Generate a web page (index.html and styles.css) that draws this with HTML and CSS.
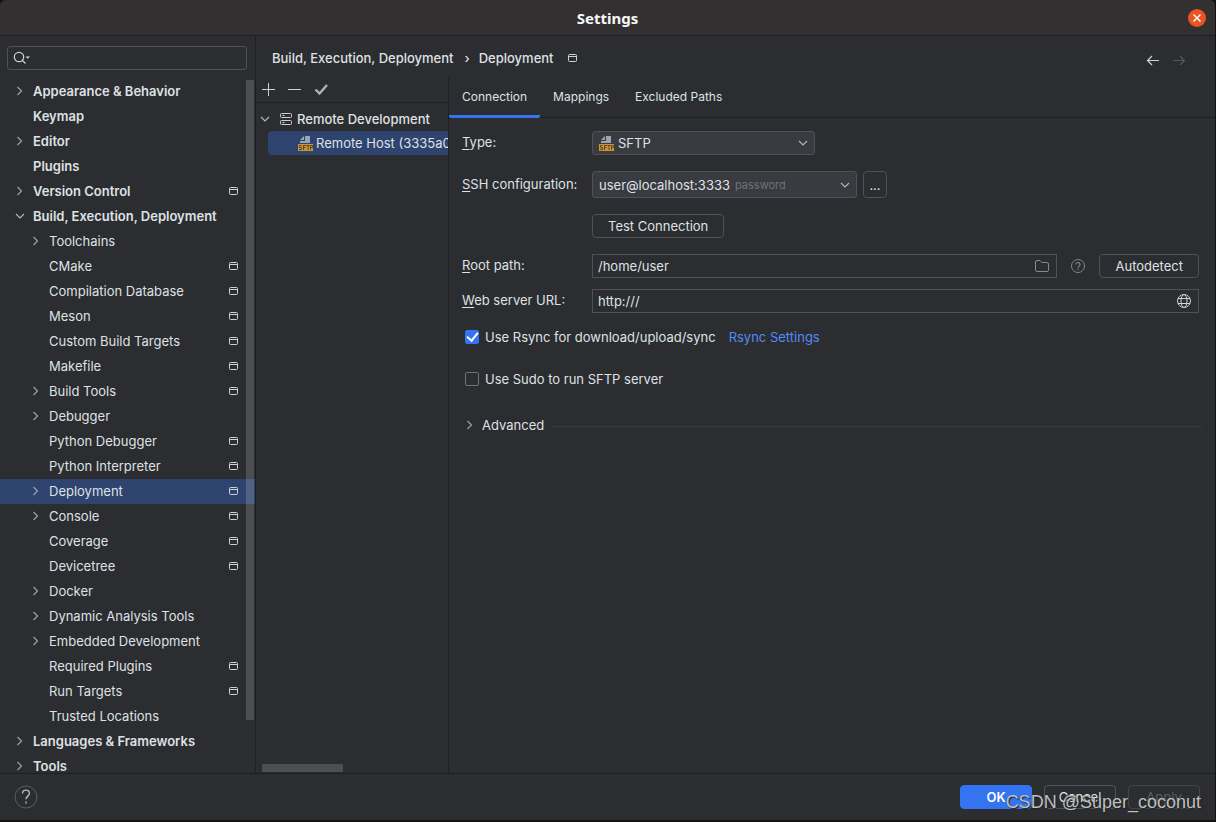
FILE: index.html
```html
<!DOCTYPE html>
<html lang="en">
<head>
<meta charset="utf-8">
<title>Settings</title>
<link rel="stylesheet" href="styles.css">
</head>
<body>
<svg class="defs" aria-hidden="true">
  <symbol id="right" viewBox="0 0 16 16"><path d="M5.500 4l4 4-4 4" fill="none" stroke="#9da0a8" stroke-width="1.2"/></symbol>
  <symbol id="down" viewBox="0 0 16 16"><path d="M4 6l4 4 4-4" fill="none" stroke="#b4b8bf" stroke-width="1.1"/></symbol>
  <symbol id="project" viewBox="0 0 16 16"><rect x="3.5" y="4.5" width="8" height="7" rx="1" fill="none" stroke="#ced0d6"/><path d="M4 6.500h7" stroke="#ced0d6"/></symbol>
  <symbol id="sftp" viewBox="0 0 16 16"><path d="M7 1h5v7H2V6h5z" fill="#9aa7b0"/><path d="M6 1v4H2z" fill="#9aa7b0"/><rect x="0" y="9" width="15" height="7" fill="#c9953c"/><path d="M3.5 10.5H1.500V12.500H3.500V14.500H1M5.500 15V10.500H8M5.500 12.500H7.500M8.500 10.500H11.500M10 10.500V15M12.500 15V10.500H14.500V12.500H12.500" fill="none" stroke="#54421f" stroke-width=".9"/></symbol>
</svg>
<div class="window">
  <header class="titlebar">
    <h1 class="title">Settings</h1>
    <button class="close" aria-label="Close"><svg width="18" height="18" viewBox="0 0 18 18"><circle cx="9" cy="9" r="9" fill="#e95420"/><path d="M5.500 5.500l7 7M12.500 5.500l-7 7" stroke="#fff" stroke-width="1.500"/></svg></button>
  </header>
  <div class="body">
    <aside class="sidebar">
      <label class="search">
        <svg width="18" height="16" viewBox="0 0 18 16" fill="none" stroke="#ced0d6"><circle cx="6" cy="7" r="4.700" stroke-width="1.200"/><path d="M9.500 10.500l3 3" stroke-width="1.200"/><path d="M12.500 6.500h4.500l-2.250 2.250z" fill="#ced0d6" stroke="none"/></svg>
        <input type="text" aria-label="Search settings">
      </label>
      <div class="scroll">
      <ul class="tree">
        <li><a href="#" class="row top"><svg class="ico"><use href="#right"/></svg><span>Appearance &amp; Behavior</span></a></li>
        <li><a href="#" class="row top leaf"><span>Keymap</span></a></li>
        <li><a href="#" class="row top"><svg class="ico"><use href="#right"/></svg><span>Editor</span></a></li>
        <li><a href="#" class="row top leaf"><span>Plugins</span></a></li>
        <li><a href="#" class="row top"><svg class="ico"><use href="#right"/></svg><span>Version Control</span><svg class="ico mark"><use href="#project"/></svg></a></li>
        <li><a href="#" class="row top"><svg class="ico"><use href="#down"/></svg><span>Build, Execution, Deployment</span></a>
          <ul class="sub">
            <li><a href="#" class="row"><svg class="ico"><use href="#right"/></svg><span>Toolchains</span></a></li>
            <li><a href="#" class="row leaf"><span>CMake</span><svg class="ico mark"><use href="#project"/></svg></a></li>
            <li><a href="#" class="row leaf"><span>Compilation Database</span><svg class="ico mark"><use href="#project"/></svg></a></li>
            <li><a href="#" class="row leaf"><span>Meson</span><svg class="ico mark"><use href="#project"/></svg></a></li>
            <li><a href="#" class="row leaf"><span>Custom Build Targets</span><svg class="ico mark"><use href="#project"/></svg></a></li>
            <li><a href="#" class="row leaf"><span>Makefile</span><svg class="ico mark"><use href="#project"/></svg></a></li>
            <li><a href="#" class="row"><svg class="ico"><use href="#right"/></svg><span>Build Tools</span><svg class="ico mark"><use href="#project"/></svg></a></li>
            <li><a href="#" class="row"><svg class="ico"><use href="#right"/></svg><span>Debugger</span></a></li>
            <li><a href="#" class="row leaf"><span>Python Debugger</span><svg class="ico mark"><use href="#project"/></svg></a></li>
            <li><a href="#" class="row leaf"><span>Python Interpreter</span><svg class="ico mark"><use href="#project"/></svg></a></li>
            <li><a href="#" class="row selected"><svg class="ico"><use href="#right"/></svg><span>Deployment</span><svg class="ico mark"><use href="#project"/></svg></a></li>
            <li><a href="#" class="row"><svg class="ico"><use href="#right"/></svg><span>Console</span><svg class="ico mark"><use href="#project"/></svg></a></li>
            <li><a href="#" class="row leaf"><span>Coverage</span><svg class="ico mark"><use href="#project"/></svg></a></li>
            <li><a href="#" class="row leaf"><span>Devicetree</span><svg class="ico mark"><use href="#project"/></svg></a></li>
            <li><a href="#" class="row"><svg class="ico"><use href="#right"/></svg><span>Docker</span></a></li>
            <li><a href="#" class="row"><svg class="ico"><use href="#right"/></svg><span>Dynamic Analysis Tools</span></a></li>
            <li><a href="#" class="row"><svg class="ico"><use href="#right"/></svg><span>Embedded Development</span></a></li>
            <li><a href="#" class="row leaf"><span>Required Plugins</span><svg class="ico mark"><use href="#project"/></svg></a></li>
            <li><a href="#" class="row leaf"><span>Run Targets</span><svg class="ico mark"><use href="#project"/></svg></a></li>
            <li><a href="#" class="row leaf"><span>Trusted Locations</span></a></li>
          </ul>
        </li>
        <li><a href="#" class="row top"><svg class="ico"><use href="#right"/></svg><span>Languages &amp; Frameworks</span></a></li>
        <li><a href="#" class="row top"><svg class="ico"><use href="#right"/></svg><span>Tools</span></a></li>
      </ul>
      <div class="thumb"></div>
      </div>
    </aside>
    <main class="main">
      <div class="crumbs">
        <a href="#">Build, Execution, Deployment</a>
        <span class="sep">›</span>
        <a href="#">Deployment</a>
        <svg class="ico"><use href="#project"/></svg>
        <div class="history">
          <button aria-label="Back"><svg class="ico" viewBox="0 0 16 16" fill="none" stroke="#ced0d6" stroke-width="1.200"><path d="M14 8.500H2.500M7 4L2.500 8.500 7 13"/></svg></button>
          <button aria-label="Forward" disabled><svg class="ico" viewBox="0 0 16 16" fill="none" stroke="#55575c" stroke-width="1.200"><path d="M2 8.500h11.500M9 4L13.500 8.500 9 13"/></svg></button>
        </div>
      </div>
      <div class="content">
        <section class="servers">
          <div class="tools">
            <button aria-label="Add"><svg class="ico" viewBox="0 0 16 16"><path d="M2 8.500h13M8.500 2v13" stroke="#ced0d6"/></svg></button>
            <button aria-label="Remove"><svg class="ico" viewBox="0 0 16 16"><path d="M2 8.500h13" stroke="#ced0d6"/></svg></button>
            <button aria-label="Use as default"><svg class="ico" viewBox="0 0 16 16"><path d="M3.500 8.500l4 4 7.500-8.500" fill="none" stroke="#afb1b3" stroke-width="2.400"/></svg></button>
          </div>
          <ul class="hosts">
            <li><a href="#" class="host group"><svg class="ico"><use href="#down"/></svg><svg class="ico" viewBox="0 0 16 16" fill="none" stroke="#ced0d6"><rect x="2.500" y="2.500" width="11" height="4" rx="1"/><rect x="2.500" y="9.500" width="11" height="4" rx="1"/><path d="M4.500 4.500h2M4.500 11.500h2"/></svg><span>Remote Development</span></a></li>
            <li><a href="#" class="host active"><svg class="ico"><use href="#sftp"/></svg><span>Remote Host (3335a0b1)</span></a></li>
          </ul>
          <div class="hthumb"></div>
        </section>
        <section class="details">
          <nav class="tabs">
            <a href="#" class="tab current">Connection</a>
            <a href="#" class="tab">Mappings</a>
            <a href="#" class="tab">Excluded Paths</a>
          </nav>
          <form class="form">
            <div class="line type">
              <label class="name" for="type"><u>T</u>ype:</label>
              <div class="combo kind"><select id="type"><option>SFTP</option></select><svg class="ico lead"><use href="#sftp"/></svg><svg class="ico arrow"><use href="#down"/></svg></div>
            </div>
            <div class="line ssh">
              <label class="name" for="ssh"><u>S</u>SH configuration:</label>
              <div class="combo conf"><select id="ssh"><option>user@localhost:3333</option></select><span class="hint">password</span><svg class="ico arrow"><use href="#down"/></svg></div>
              <button type="button" class="btn more" aria-label="Edit configurations">...</button>
            </div>
            <div class="line test"><span class="name"></span><button type="button" class="btn">Test Connection</button></div>
            <div class="line root">
              <label class="name" for="root"><u>R</u>oot path:</label>
              <div class="field"><input id="root" type="text" value="/home/user"><svg class="ico" viewBox="0 0 16 16"><path d="M1.500 12V4a1.500 1.500 0 0 1 1.500-1.500h3l2 2h5A1.500 1.500 0 0 1 14.500 6v6a1.500 1.500 0 0 1-1.500 1.500H3A1.500 1.500 0 0 1 1.500 12z" fill="none" stroke="#868a91"/></svg></div>
              <svg class="ico info" viewBox="0 0 16 16" fill="none" stroke="#7d8588"><circle cx="8" cy="8" r="6.500"/><path d="M6 6.500a2 2 0 1 1 3 1.700c-.7.4-1 .7-1 1.500M8 10.700v1.300" stroke-width="1.200"/></svg>
              <button type="button" class="btn">Autodetect</button>
            </div>
            <div class="line web">
              <label class="name" for="web"><u>W</u>eb server URL:</label>
              <div class="field"><input id="web" type="text" value="http:///"><svg class="ico" viewBox="0 0 16 16" fill="none" stroke="#ced0d6"><circle cx="8" cy="8" r="6.500"/><ellipse cx="8" cy="8" rx="3" ry="6.500"/><path d="M2 5.500h12M2 10.500h12"/></svg></div>
            </div>
            <div class="line rsync"><label class="check"><input type="checkbox" checked>Use Rsync for download/upload/sync</label><a href="#" class="link">Rsync Settings</a></div>
            <div class="line sudo"><label class="check"><input type="checkbox">Use Sudo to run SFTP server</label></div>
            <div class="line advanced"><button type="button" class="expand"><svg class="ico"><use href="#right"/></svg>Advanced</button><hr class="rule"></div>
          </form>
        </section>
      </div>
    </main>
  </div>
  <footer class="footer">
    <button class="help" aria-label="Help"><svg width="24" height="24" viewBox="0 0 24 24" fill="none"><circle cx="12" cy="12" r="11" stroke="#5a5d63"/><path d="M8.500 8.500C8.500 4 15.500 4 15.500 8.300c0 2.700-3.500 3-3.500 6M12 16.500v2" stroke="#b4b8bf" stroke-width="1.400"/></svg></button>
    <div class="actions">
      <button class="btn primary">OK</button>
      <button class="btn">Cancel</button>
      <button class="btn" disabled>Apply</button>
    </div>
    <span class="watermark">CSDN @Super_coconut</span>
  </footer>
</div>
</body>
</html>
```

FILE: styles.css
```css
* { box-sizing: border-box; }
body {
  margin: 0;
  background: #131314;
  color: #dfe1e5;
  font: 13px/16px Inter, sans-serif;
}
a { color: inherit; text-decoration: none; }
ul { list-style: none; margin: 0; padding: 0; }
button, input, select { font: inherit; color: inherit; }
button { background: none; border: 0; padding: 0; }
.defs { position: absolute; width: 0; height: 0; }
.ico { width: 16px; height: 16px; flex: none; display: block; }

.window {
  height: 100vh;
  display: flex;
  flex-direction: column;
  background: #2b2d30;
  border-right: 1px solid #131314;
  border-bottom: 2px solid #131314;
  border-radius: 6px 6px 0 0;
  overflow: hidden;
}
.titlebar {
  flex: none;
  height: 36px;
  display: grid;
  grid-template-columns: 1fr auto 1fr;
  align-items: center;
  background: #323030;
  border-bottom: 1px solid #1e1f22;
  padding: 0 9px;
}
.title {
  grid-column: 2;
  margin: 0;
  font: bold 15px/20px "Noto Sans", sans-serif;
  color: #f7f7f7;
}
.close { justify-self: end; display: flex; }
.body { flex: 1; min-height: 0; display: flex; }

.sidebar {
  flex: none;
  width: 256px;
  display: flex;
  flex-direction: column;
  border-right: 1px solid #1e1f22;
}
.search {
  flex: none;
  display: flex;
  align-items: center;
  height: 24px;
  margin: 10px 8px 9px 7px;
  padding: 0 5px;
  border: 1px solid #4e5157;
  border-radius: 3px;
}
.search input { flex: 1; min-width: 0; background: none; border: 0; outline: 0; }
.scroll { position: relative; flex: 1; min-height: 0; overflow: hidden; }
.thumb {
  position: absolute;
  top: 1px;
  right: 1px;
  width: 8px;
  height: 640px;
  background: rgba(255, 255, 255, .16);
}
.row {
  display: flex;
  align-items: center;
  height: 25px;
  padding: 0 13px 1px 12px;
  gap: 5px;
}
.row.leaf { padding-left: 33px; }
.row.top { font-weight: 600; }
.sub .row { padding-left: 28px; }
.sub .row.leaf { padding-left: 49px; }
.mark { margin-left: auto; }
.selected { background: #2e436e; }

.main { flex: 1; min-width: 0; display: flex; flex-direction: column; }
.crumbs {
  flex: none;
  display: flex;
  align-items: center;
  height: 42px;
  padding: 2px 28px 0 16px;
  font-weight: 500;
}
.sep { padding: 0 9px 0 11px; }
.crumbs .ico { margin-left: 11px; }
.history { margin-left: auto; display: flex; gap: 10px; padding-top: 4px; }
.history .ico { margin: 0; }
.content { flex: 1; min-height: 0; display: flex; }

.servers {
  flex: none;
  width: 193px;
  display: flex;
  flex-direction: column;
  overflow: hidden;
  border-right: 1px solid #1e1f22;
}
.tools {
  flex: none;
  display: flex;
  align-items: center;
  gap: 10px;
  height: 25px;
  padding: 0 0 2px 4px;
  border-bottom: 1px solid #1e1f22;
}
.hosts { padding-top: 4px; }
.host { display: flex; align-items: center; height: 24px; white-space: nowrap; }
.group { gap: 3px; padding-left: 1px; font-weight: 500; }
.group .ico + .ico { margin-left: 2px; }
.active {
  gap: 2px;
  margin-left: 12px;
  padding-left: 30px;
  background: #2e436e;
  border-radius: 4px 0 0 4px;
}
.hthumb { width: 81px; height: 8px; margin: auto 0 1px 6px; background: #4d4e51; }

.details { flex: 1; min-width: 0; }
.tabs {
  display: flex;
  height: 40px;
  border-bottom: 1px solid #1e1f22;
  font-size: 12px;
}
.tab { height: 40px; padding: 11px 13px 0; }
.current { border-bottom: 3px solid #3574f0; border-radius: 0 0 2px 2px; }
.form { padding: 13px 16px 0 13px; }
.line { display: flex; align-items: center; }
.name { flex: none; width: 130px; padding-bottom: 2px; }
.name u { text-underline-offset: 2px; }
.combo { position: relative; height: 24px; }
.combo select {
  appearance: none;
  width: 100%;
  height: 100%;
  padding: 0 24px 0 6px;
  background: #393b40;
  border: 1px solid #4e5157;
  border-radius: 3px;
}
.kind { width: 223px; }
.kind select { padding-left: 25px; }
.lead { position: absolute; left: 7px; top: 4px; }
.arrow { position: absolute; right: 4px; top: calc(50% - 8px); }
.conf { width: 265px; height: 27px; }
.hint { position: absolute; left: 143px; top: 6px; font-size: 11px; color: #6f737a; }
.btn {
  height: 24px;
  padding: 0 15px;
  border: 1px solid #4e5157;
  border-radius: 4px;
}
.more { width: 24px; height: 27px; padding: 0; margin-left: 6px; }
.ssh { margin-top: 16px; }
.test { margin-top: 16px; }
.root { margin-top: 16px; }
.web { margin-top: 11px; }
.field {
  flex: 1;
  min-width: 0;
  display: flex;
  align-items: center;
  height: 24px;
  padding: 0 6px 0 5px;
  border: 1px solid #4e5157;
}
.field input { flex: 1; min-width: 0; padding: 0; background: none; border: 0; outline: 0; }
.info { margin: 0 13px; }
.rsync { margin-top: 16px; }
.check { display: flex; align-items: center; gap: 6px; padding-left: 3px; }
.check input {
  appearance: none;
  width: 14px;
  height: 14px;
  margin: 0;
  border: 1px solid #6f737a;
  border-radius: 2px;
}
.check input:checked {
  display: grid;
  place-items: center;
  background: #3574f0;
  border-color: #3574f0;
}
.check input:checked::before {
  content: "";
  width: 9px;
  height: 5px;
  margin-bottom: 3px;
  border: solid #fff;
  border-width: 0 0 2px 2px;
  transform: rotate(-50deg);
}
.link { margin-left: 13px; color: #548af7; }
.sudo { margin-top: 26px; }
.advanced { margin-top: 30px; gap: 7px; }
.expand { display: flex; align-items: center; gap: 4px; }
.rule { flex: 1; margin: 2px -3px 0 0; border: 0; border-top: 1px solid #393b40; }

.footer {
  position: relative;
  flex: none;
  display: flex;
  align-items: center;
  justify-content: space-between;
  height: 47px;
  padding: 0 15px 0 14px;
  border-top: 1px solid #1e1f22;
}
.help { display: flex; }
.actions { display: flex; gap: 12px; }
.actions .btn { width: 72px; padding: 0; }
.actions .primary { background: #3574f0; border-color: #3574f0; color: #fff; font-weight: 600; }
.btn:disabled { border-color: #43454a; color: #5a5d63; }
.watermark {
  position: absolute;
  right: 14px;
  top: 17px;
  font: 18px/22px "Liberation Sans", sans-serif;
  color: #bdbebf;
  text-shadow: 1px 1px 1px #222;
}
```
